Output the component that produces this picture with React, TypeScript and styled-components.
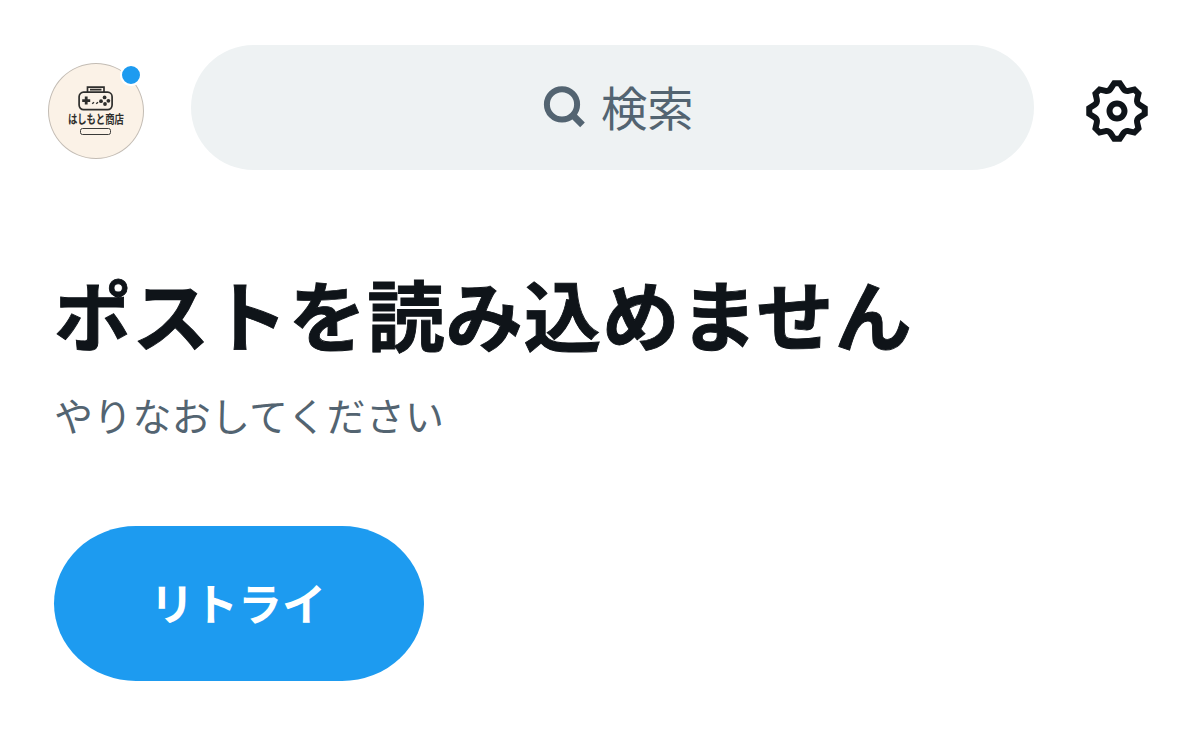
import React from "react";
import styled, { createGlobalStyle } from "styled-components";

const GlobalStyle = createGlobalStyle`
  body {
    margin: 0;
    background: #ffffff;
    font-family: "Noto Sans CJK JP", sans-serif;
  }
`;

const Page = styled.div`
  box-sizing: border-box;
  width: 1200px;
  height: 739px;
  overflow: hidden;
  background: #ffffff;
`;

const TopBar = styled.header`
  box-sizing: border-box;
  display: flex;
  align-items: flex-start;
  height: 170px;
  padding: 44px 47px 0 48px;
`;

const Avatar = styled.div`
  position: relative;
  box-sizing: border-box;
  display: flex;
  flex-direction: column;
  align-items: center;
  width: 96px;
  height: 96px;
  margin-top: 19px;
  padding-top: 22px;
  border: 1px solid #c3bcb4;
  border-radius: 50%;
  background: #fbf2e7;
`;

const ShopName = styled.span`
  margin-top: -1px;
  color: #2e2e2c;
  font-size: 12px;
  font-weight: 700;
  line-height: 15px;
  white-space: nowrap;
  transform: scaleX(0.78);
`;

const NamePlate = styled.span`
  box-sizing: border-box;
  width: 31px;
  height: 7px;
  margin-top: 2px;
  border: 1.5px solid #3a3a38;
  border-radius: 2.5px;
`;

const UnreadDot = styled.span`
  position: absolute;
  top: 0;
  right: 1px;
  width: 18px;
  height: 18px;
  border: 2px solid #ffffff;
  border-radius: 50%;
  background: #1d9bf0;
`;

const SearchField = styled.button`
  box-sizing: border-box;
  display: flex;
  align-items: center;
  justify-content: center;
  gap: 15px;
  width: 843px;
  height: 125px;
  margin: 1px 0 0 47px;
  padding: 0 0 3px 12px;
  border: none;
  border-radius: 62.5px;
  background: #eef2f3;
  color: #536471;
  font-family: inherit;
  font-size: 46.4px;
  line-height: 60px;
`;

const SettingsButton = styled.button`
  display: flex;
  width: 72px;
  height: 72px;
  margin: 30.5px 0 0 47.4px;
  padding: 0;
  border: none;
  background: none;
  color: #0f1419;
`;

const Content = styled.main`
  display: flex;
  flex-direction: column;
  align-items: flex-start;
  padding: 86px 54px 0;
`;

const Title = styled.h1`
  margin: 0;
  color: #0f1419;
  font-size: 77.4px;
  font-weight: 700;
  line-height: 112px;
  letter-spacing: 0.9px;
  white-space: nowrap;
  -webkit-text-stroke: 0.9px #0f1419;
`;

const Message = styled.p`
  margin: 18px 0 0;
  color: #536471;
  font-size: 39px;
  line-height: 56px;
  letter-spacing: 0.25px;
  white-space: nowrap;
`;

const RetryButton = styled.button`
  box-sizing: border-box;
  width: 370px;
  height: 155px;
  margin-top: 84px;
  padding: 0 2px 3px 0;
  border: none;
  border-radius: 82px / 77.5px;
  background: #1d9bf0;
  color: #ffffff;
  font-family: inherit;
  font-size: 44px;
  font-weight: 700;
  line-height: 60px;
`;

const ConsoleIcon = () => (
  <svg width="36" height="26" viewBox="0 0 36 26" fill="none" stroke="#2e2e2c">
    <path d="M9.5 6V1.2h16.5V6M12 3.7h11.5" strokeWidth="1.7" />
    <rect x="1.1" y="6.2" width="33" height="17.4" rx="4.5" strokeWidth="1.7" />
    <path d="M8.2 10.6v8M4.2 14.6h8" strokeWidth="2.8" />
    <path d="M14.2 17.8l1.8-1.6M18.2 17.8l1.8-1.6" strokeWidth="1.4" />
    <g fill="#2e2e2c" stroke="none">
      <circle cx="26.6" cy="11.4" r="1.9" />
      <circle cx="23" cy="15.2" r="1.9" />
      <circle cx="30.4" cy="14.8" r="1.9" />
      <circle cx="27" cy="18" r="1.9" />
    </g>
  </svg>
);

const SearchIcon = () => (
  <svg width="43" height="43" viewBox="0 0 43 43" fill="none" stroke="currentColor">
    <circle cx="19" cy="19.4" r="15.1" strokeWidth="6" />
    <path d="M28.5 28.9l11 11" strokeWidth="6.6" />
  </svg>
);

const GearIcon = () => (
  <svg width="72" height="72" viewBox="0 0 24 24" fill="currentColor">
    <path d="M10.54 1.75h2.92l1.57 2.36c.11.17.32.25.53.21l2.53-.59 2.17 2.17-.58 2.54c-.05.2.04.41.21.53l2.36 1.57v2.92l-2.36 1.57c-.17.12-.26.33-.21.53l.58 2.54-2.17 2.17-2.53-.59c-.21-.04-.42.04-.53.21l-1.57 2.36h-2.92l-1.58-2.36c-.11-.17-.32-.25-.52-.21l-2.54.59-2.17-2.17.58-2.54c.05-.2-.03-.41-.21-.53l-2.35-1.57v-2.92L4.1 8.97c.18-.12.26-.33.21-.53L3.73 5.9 5.9 3.73l2.54.59c.2.04.41-.04.52-.21l1.58-2.36zm1.07 2l-.98 1.47C10.05 6.08 9 6.5 7.99 6.27l-1.46-.34-.6.6.33 1.46c.24 1.01-.18 2.07-1.05 2.64l-1.46.98v.78l1.46.98c.87.57 1.29 1.63 1.05 2.64l-.33 1.46.6.6 1.46-.34c1.01-.23 2.06.19 2.64 1.05l.98 1.47h.78l.97-1.47c.58-.86 1.63-1.28 2.65-1.05l1.45.34.61-.6-.34-1.46c-.23-1.01.18-2.07 1.05-2.64l1.47-.98v-.78l-1.47-.98c-.87-.57-1.28-1.63-1.05-2.64l.34-1.46-.61-.6-1.45.34c-1.02.23-2.07-.19-2.65-1.05l-.97-1.47h-.78zM12 10.5c-.83 0-1.5.67-1.5 1.5s.67 1.5 1.5 1.5c.82 0 1.5-.67 1.5-1.5s-.68-1.5-1.5-1.5zM8.5 12c0-1.93 1.56-3.5 3.5-3.5 1.93 0 3.5 1.57 3.5 3.5s-1.57 3.5-3.5 3.5c-1.94 0-3.5-1.57-3.5-3.5z" />
  </svg>
);

const App: React.FC = () => {
  return (
    <Page>
      <GlobalStyle />
      <TopBar>
        <Avatar>
          <ConsoleIcon />
          <ShopName>はしもと商店</ShopName>
          <NamePlate />
          <UnreadDot />
        </Avatar>
        <SearchField type="button">
          <SearchIcon />
          検索
        </SearchField>
        <SettingsButton type="button">
          <GearIcon />
        </SettingsButton>
      </TopBar>
      <Content>
        <Title>ポストを読み込めません</Title>
        <Message>やりなおしてください</Message>
        <RetryButton type="button">リトライ</RetryButton>
      </Content>
    </Page>
  );
};

export default App;
